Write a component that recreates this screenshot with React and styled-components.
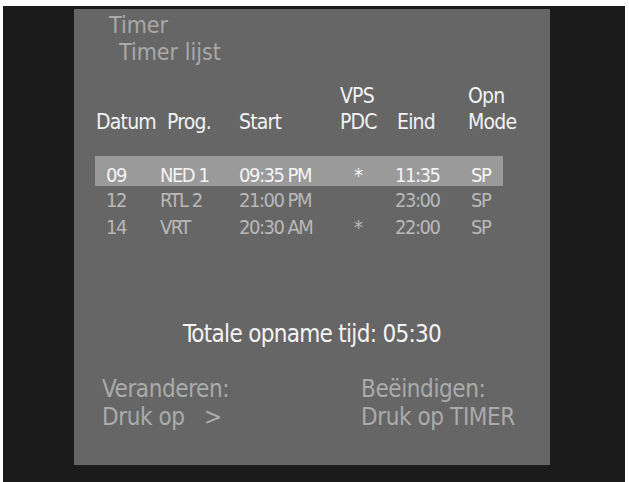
import React from "react";
import styled, { createGlobalStyle } from "styled-components";

const GlobalStyle = createGlobalStyle`
  html, body { margin: 0; padding: 0; background: #ffffff; }
  body { font-family: "DejaVu Sans Condensed", "DejaVu Sans", sans-serif; }
`;

const FONT = `"DejaVu Sans Condensed", "DejaVu Sans", sans-serif`;
const COLS = "65px 78px 100px 57px 72px 36px";

const Screen = styled.div`
  margin: 6px 4px 0 3px;
  height: 476px;
  background: #1b1b1b;
  padding: 3px 0 0 71px;
  box-sizing: border-box;
`;

const Panel = styled.div`
  width: 476px;
  height: 456px;
  background: #666666;
  padding-top: 3px;
  box-sizing: border-box;
  display: flex;
  flex-direction: column;
  font-family: ${FONT};
`;

const TitleLine = styled.div`
  font-size: 23px;
  line-height: 27px;
  color: #a9a9a9;
  padding-left: ${(p) => p.$indent}px;
`;

const Table = styled.div`
  margin: 17px 0 0 21px;
  width: 408px;
  display: flex;
  flex-direction: column;
`;

const HeaderRow = styled.div`
  display: grid;
  grid-template-columns: ${COLS};
  align-items: end;
  font-size: 21px;
  line-height: 26px;
  letter-spacing: -0.8px;
  color: #f2f2f2;
  margin-bottom: 21px;
`;

const HeadCell = styled.div`
  padding-left: ${(p) => p.$pad}px;
  white-space: nowrap;
`;

const Row = styled.div`
  display: grid;
  grid-template-columns: ${COLS};
  font-size: 20px;
  letter-spacing: -1.5px;
  line-height: ${(p) => (p.$selected ? 21 : 26)}px;
  padding-top: ${(p) => (p.$selected ? 9 : 1)}px;
  background: ${(p) => (p.$selected ? "#9a9a9a" : "transparent")};
  color: ${(p) => (p.$selected ? "#f4f4f4" : "#b9b9b9")};
`;

const Cell = styled.div`
  padding-left: ${(p) => p.$pad}px;
  white-space: nowrap;
`;

const Total = styled.div`
  margin-top: 79px;
  text-align: center;
  font-size: 24px;
  line-height: 30px;
  letter-spacing: -0.7px;
  color: #f4f4f4;
`;

const Footer = styled.div`
  margin-top: 26px;
  padding-left: 28px;
  display: grid;
  grid-template-columns: 259px auto;
  font-size: 24px;
  line-height: 28px;
  letter-spacing: -0.4px;
  color: #ababab;
`;

const FooterCol = styled.div`
  display: flex;
  flex-direction: column;
  white-space: pre;
`;

const rows = [
  { d: "09", p: "NED 1", s: "09:35 PM", v: "*", e: "11:35", m: "SP", sel: true },
  { d: "12", p: "RTL 2", s: "21:00 PM", v: "", e: "23:00", m: "SP" },
  { d: "14", p: "VRT", s: "20:30 AM", v: "*", e: "22:00", m: "SP" },
];

export default function App() {
  return (
    <>
      <GlobalStyle />
      <Screen>
        <Panel>
          <TitleLine $indent={35}>Timer</TitleLine>
          <TitleLine $indent={45}>Timer lijst</TitleLine>
          <Table>
            <HeaderRow>
              <HeadCell $pad={1}>Datum</HeadCell>
              <HeadCell $pad={7}>Prog.</HeadCell>
              <HeadCell $pad={1}>Start</HeadCell>
              <HeadCell $pad={2}>
                VPS
                <br />
                PDC
              </HeadCell>
              <HeadCell $pad={2}>Eind</HeadCell>
              <HeadCell $pad={1}>
                Opn
                <br />
                Mode
              </HeadCell>
            </HeaderRow>
            {rows.map((r) => (
              <Row key={r.d} $selected={r.sel}>
                <Cell $pad={11}>{r.d}</Cell>
                <Cell $pad={0}>{r.p}</Cell>
                <Cell $pad={1}>{r.s}</Cell>
                <Cell $pad={16}>{r.v}</Cell>
                <Cell $pad={0}>{r.e}</Cell>
                <Cell $pad={4}>{r.m}</Cell>
              </Row>
            ))}
          </Table>
          <Total>Totale opname tijd: 05:30</Total>
          <Footer>
            <FooterCol>
              <span>Veranderen:</span>
              <span>Druk op   &gt;</span>
            </FooterCol>
            <FooterCol>
              <span>Beëindigen:</span>
              <span>Druk op TIMER</span>
            </FooterCol>
          </Footer>
        </Panel>
      </Screen>
    </>
  );
}
